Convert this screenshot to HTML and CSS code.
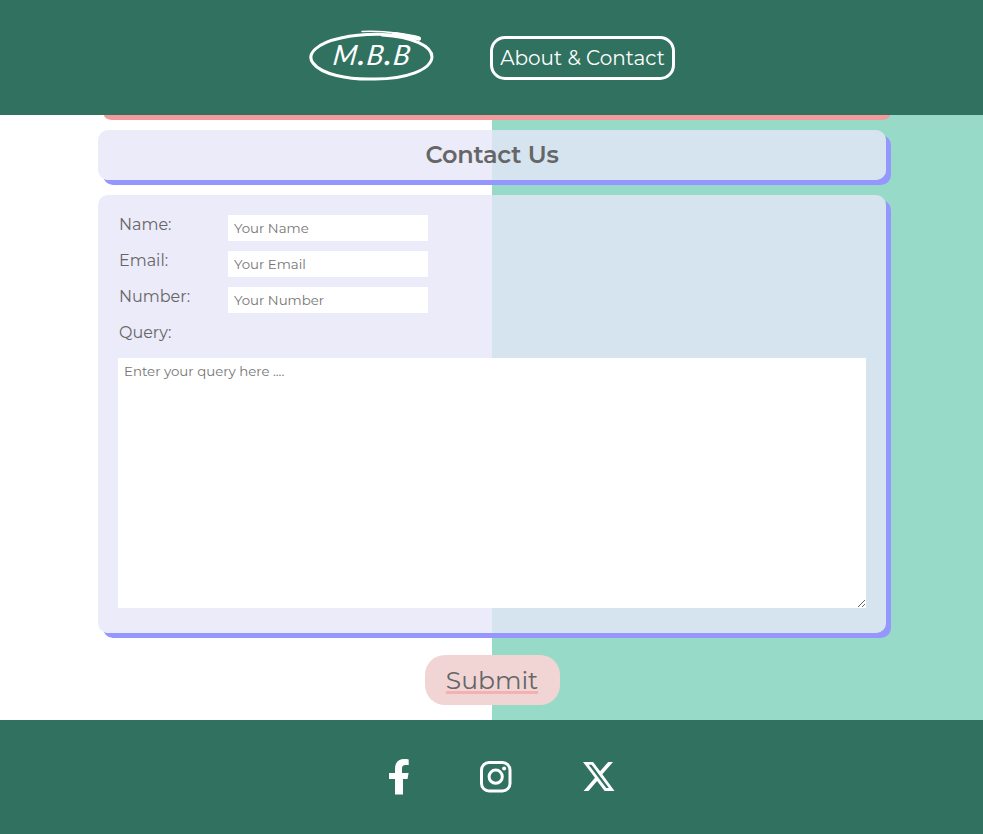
FILE: index.html
```html
<!DOCTYPE html>
<html lang="en">
<head>
<meta charset="utf-8">
<title>About &amp; Contact</title>
<link rel="stylesheet" href="styles.css">
</head>
<body>
<header class="header">
  <a class="logo" href="#">
    <svg width="128" height="56" viewBox="0 0 128 56" fill="none" stroke="#fff" stroke-linecap="round">
      <path d="M111 11C92 6 59 4 33 10 9 15-2 26 5 35c8 11 34 17 62 16 31 0 56-9 57-22 0-11-19-20-50-22" stroke-width="3"/>
      <path d="M54 3.500c23-1 42 2 57 7" stroke-width="1.500"/>
      <path d="M86 6c9 1 18 2 25 4.500" stroke-width="4"/>
      <text class="logo-text" transform="translate(24 37) skewX(-8)" x="0" y="0" textLength="77" lengthAdjust="spacing">M<tspan class="dot">.</tspan>B<tspan class="dot">.</tspan>B</text>
    </svg>
  </a>
  <a class="nav-link" href="#">About &amp; Contact</a>
</header>
<main class="main">
  <div class="previous"></div>
  <h2 class="card title">Contact Us</h2>
  <form class="card form">
    <div class="row"><label for="name">Name:</label><input id="name" placeholder="Your Name"></div>
    <div class="row"><label for="email">Email:</label><input id="email" placeholder="Your Email"></div>
    <div class="row"><label for="number">Number:</label><input id="number" placeholder="Your Number"></div>
    <div class="row"><label for="query">Query:</label></div>
    <textarea id="query" placeholder="Enter your query here ...."></textarea>
  </form>
  <button class="submit" type="button"><span>Submit</span></button>
</main>
<footer class="footer">
  <a href="#" aria-label="Facebook"><svg width="20" height="36" viewBox="0 0 20 36"><path fill="#fff" d="M6 35.500V20H0v-6h6V10C6 3.200 9.700 0 15.200 0c1.800 0 3.300.1 4.500.4V6h-3C13.900 6 13 7.300 13 9.700V14h6.600l-1.100 6H14v15.500Z"/></svg></a>
  <a href="#" aria-label="Instagram"><svg width="32" height="32" viewBox="0 0 32 32" fill="none" stroke="#fff" stroke-width="3"><rect x="1.500" y="1.500" width="28.500" height="28.500" rx="7.500"/><circle cx="15.700" cy="15.700" r="6.600"/><circle cx="24.100" cy="7.400" r="2" fill="#fff" stroke="none"/></svg></a>
  <a class="x-link" href="#" aria-label="X"><svg width="32" height="29" viewBox="0 0 32 29"><path fill="#fff" fill-rule="evenodd" d="M25.200 0H30L19.300 12.300 31.500 29h-9.900l-7.500-10.100L5.500 29H.6L12 15.800 0 0h10.100l7 9.300ZM23.200 26.100h2.700L8.600 2.700H5.700Z"/></svg></a>
</footer>
</body>
</html>
```
FILE: styles.css
```css
* { box-sizing: border-box; }
body {
  margin: 0;
  height: 834px;
  display: flex;
  flex-direction: column;
  overflow: hidden;
  font-family: Montserrat, Inter, sans-serif;
  font-weight: 400;
  color: #666;
  background: linear-gradient(to right, #fff 492px, #98dac8 492px);
}
.header {
  height: 115px;
  flex: none;
  display: flex;
  align-items: center;
  justify-content: center;
  gap: 54px;
  background: #30725f;
}
.logo { width: 128px; height: 56px; margin-top: -3px; }
.logo svg { display: block; }
.logo-text {
  font: italic 400 28px Lato, sans-serif;
  fill: #fff;
  stroke: none;
}
.dot { font-weight: 900; }
.nav-link {
  width: 185px;
  height: 44px;
  margin-top: 1px;
  border: 3px solid #fff;
  border-radius: 15px;
  font-size: 20px;
  font-weight: 400;
  line-height: 38px;
  text-align: center;
  white-space: nowrap;
  color: #fff;
  text-decoration: none;
}
.main {
  height: 605px;
  flex: none;
  display: flex;
  flex-direction: column;
  align-items: center;
}
.previous {
  width: 786px;
  height: 5px;
  margin-left: 11px;
  margin-bottom: 10px;
  background: #f39a9c;
  border-radius: 0 0 8px 8px / 0 0 5px 5px;
}
.card {
  width: 788px;
  margin: 0 0 15px 1px;
  border-radius: 10px;
  background: linear-gradient(to right, #ecebfa 50%, #d6e4f0 50%);
  box-shadow: 5px 5px #9696ff;
}
.title {
  height: 50px;
  flex: none;
  font-size: 24px;
  font-weight: 600;
  line-height: 50px;
  text-align: center;
  letter-spacing: -.2px;
}
.form { height: 438px; padding: 20px; margin-bottom: 22px; }
.row { display: flex; height: 26px; margin-bottom: 10px; }
label {
  width: 110px;
  padding-left: 1px;
  font-size: 16px;
  line-height: 19px;
}
input, textarea {
  border: 0;
  border-radius: 0;
  outline: 0;
  background: #fff;
  font-family: inherit;
  font-size: 13.333px;
}
input { width: 200px; height: 26px; padding: 1px 6px; }
textarea { display: block; width: 748px; height: 250px; margin-top: -1px; padding: 5px 6px; resize: both; }
::placeholder { color: #757575; }
.submit {
  width: 135px;
  height: 50px;
  margin-left: 1px;
  padding: 0;
  border: 0;
  border-radius: 20px;
  background: #f1d5d5;
  color: #666;
  font-family: inherit;
  font-size: 25px;
  line-height: 50px;
}
.submit span {
  text-decoration: underline 3px #f3b1b1;
  text-underline-offset: 2px;
  text-decoration-skip-ink: none;
}
.footer {
  height: 114px;
  flex: none;
  display: flex;
  align-items: center;
  justify-content: center;
  gap: 71px;
  padding-left: 20px;
  background: #30725f;
}
.footer svg { display: block; }
.x-link { margin-bottom: 2px; }
```
